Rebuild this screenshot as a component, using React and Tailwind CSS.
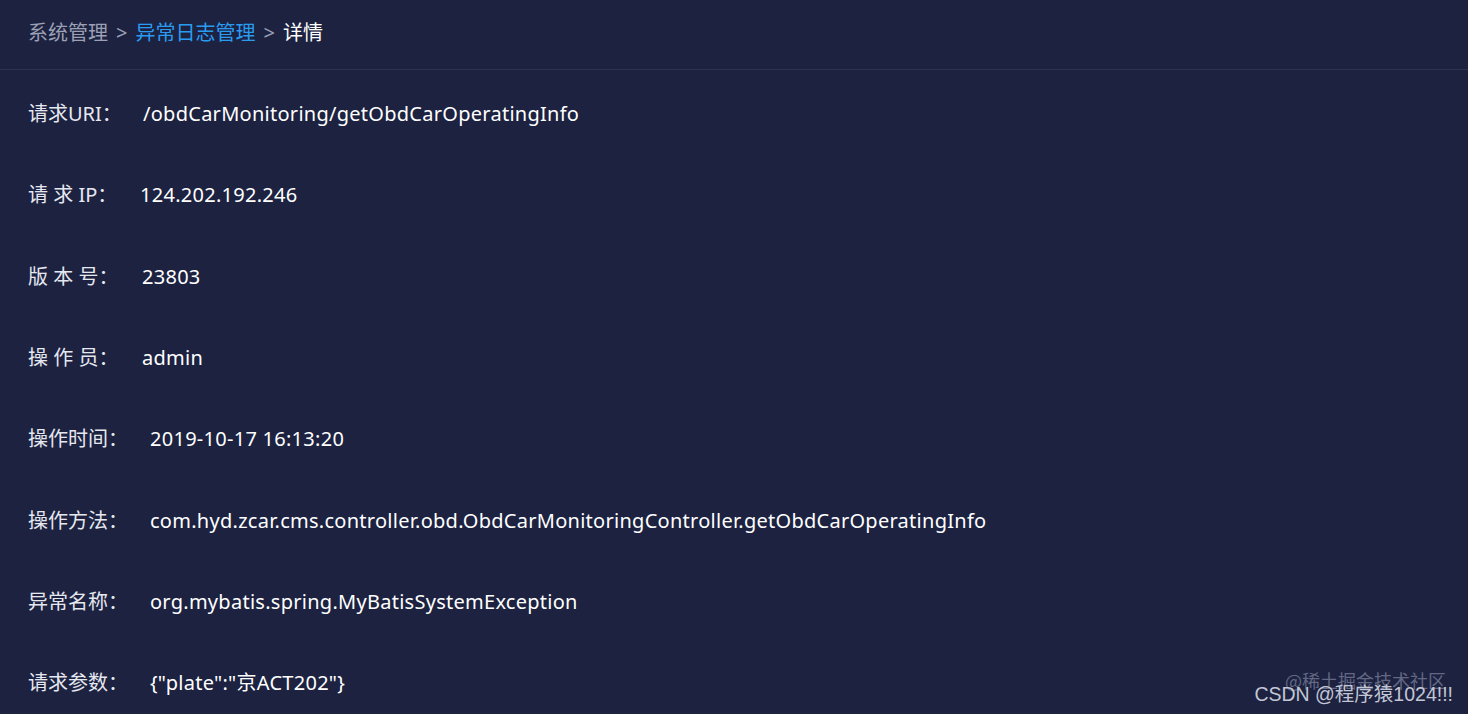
const ROWS = [
  { label: '请求URI：', value: '/obdCarMonitoring/getObdCarOperatingInfo', w: 'w-[115px]' },
  { label: '请 求 IP：', value: '124.202.192.246', w: 'w-[112px]' },
  { label: '版 本 号：', value: '23803', w: 'w-[114px]' },
  { label: '操 作 员：', value: 'admin', w: 'w-[114px]' },
  { label: '操作时间：', value: '2019-10-17 16:13:20', w: 'w-[122px]' },
  { label: '操作方法：', value: 'com.hyd.zcar.cms.controller.obd.ObdCarMonitoringController.getObdCarOperatingInfo', w: 'w-[122px]' },
  { label: '异常名称：', value: 'org.mybatis.spring.MyBatisSystemException', w: 'w-[122px]' },
  { label: '请求参数：', value: '{"plate":"京ACT202"}', w: 'w-[122px]' },
]

export default function App() {
  return (
    <div className="relative w-[1468px] h-[714px] overflow-hidden bg-[#1c2240] font-['Noto_Sans','Noto_Sans_CJK_SC',sans-serif]">
      <div className="h-[70px] flex items-center pb-[3px] px-7 text-[20px] border-b border-[#2c3252]">
        <span className="text-[#9ba0b5]">系统管理</span>
        <span className="text-[#9ba0b5] mx-[8px]">&gt;</span>
        <span className="text-[#2a9cf0]">异常日志管理</span>
        <span className="text-[#9ba0b5] mx-[8px]">&gt;</span>
        <span className="text-white">详情</span>
      </div>

      <div className="pt-[3.5px] px-7">
        {ROWS.map((r) => (
          <div key={r.label} className="h-[81.3px] flex items-center text-[20px] text-white whitespace-pre">
            <span className={`${r.w} shrink-0 text-[#e6e8f0]`}>{r.label}</span>
            <span className="tracking-[0.27px]">{r.value}</span>
          </div>
        ))}
      </div>

      <div className="absolute right-[22px] bottom-[20px] text-[18px] text-[#626884] font-['Noto_Sans_CJK_SC',sans-serif]">
        @稀土掘金技术社区
      </div>
      <div className="absolute right-[15px] bottom-[5px] text-[19.5px] text-[#c3c6d4] font-['Liberation_Sans','Noto_Sans_CJK_SC',sans-serif]">
        CSDN @程序猿1024!!!
      </div>
    </div>
  )
}
